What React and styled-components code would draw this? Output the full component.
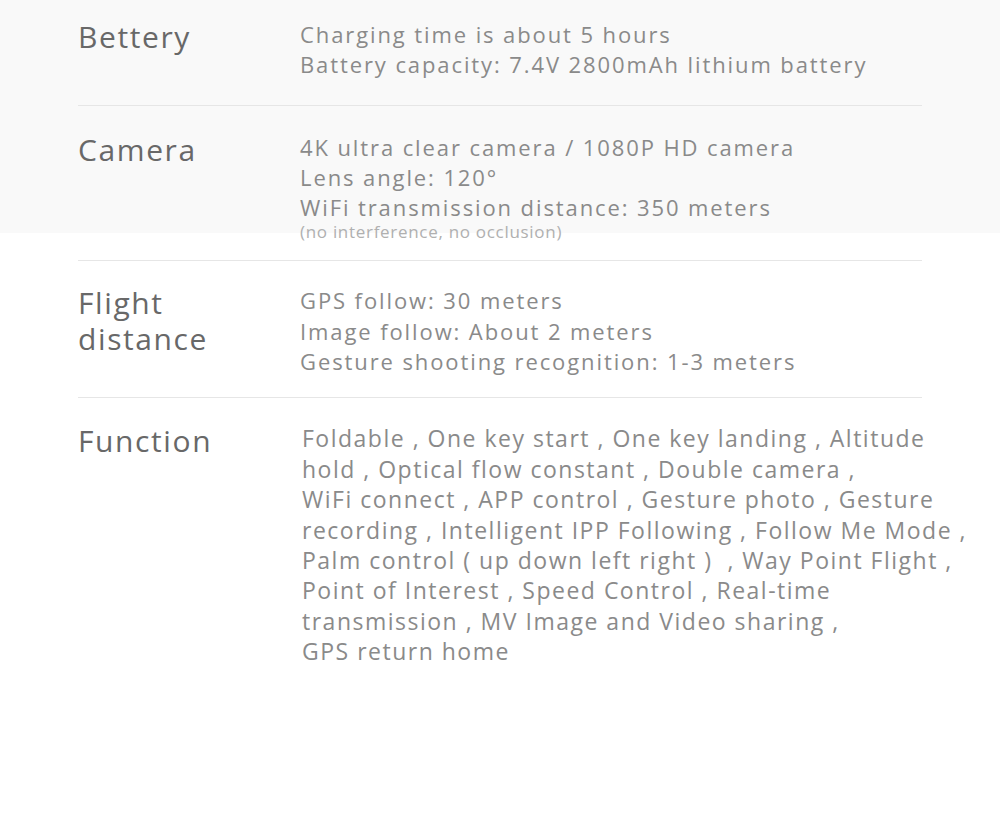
import styled, { createGlobalStyle } from "styled-components";

const GlobalStyle = createGlobalStyle`
  html, body {
    margin: 0;
    padding: 0;
    background: #ffffff;
  }
`;

const specs = [
  {
    label: ["Bettery"],
    pad: "19px 0 25px",
    values: ["Charging time is about 5 hours", "Battery capacity: 7.4V 2800mAh lithium battery"],
  },
  {
    label: ["Camera"],
    pad: "26px 0 18px",
    values: ["4K ultra clear camera / 1080P HD camera", "Lens angle: 120°", "WiFi transmission distance: 350 meters"],
    note: "(no interference, no occlusion)",
  },
  {
    label: ["Flight", "distance"],
    pad: "24px 0 21px",
    values: ["GPS follow: 30 meters", "Image follow: About 2 meters", "Gesture shooting recognition: 1-3 meters"],
  },
];

const functionLines = [
  "Foldable , One key start , One key landing , Altitude",
  "hold , Optical flow constant , Double camera ,",
  "WiFi connect , APP control , Gesture photo , Gesture",
  "recording , Intelligent IPP Following , Follow Me Mode ,",
  "Palm control ( up down left right )  , Way Point Flight ,",
  "Point of Interest , Speed Control , Real-time",
  "transmission , MV Image and Video sharing ,",
  "GPS return home",
];

export default function App() {
  return (
    <Page>
      <GlobalStyle />
      <Table>
        {specs.map((spec) => (
          <Row key={spec.label.join(" ")} pad={spec.pad}>
            <Label>
              {spec.label.map((l) => (
                <span key={l}>{l}</span>
              ))}
            </Label>
            <Values>
              {spec.values.map((v) => (
                <Value key={v}>{v}</Value>
              ))}
              {spec.note && <Note>{spec.note}</Note>}
            </Values>
          </Row>
        ))}
        <Row pad="25px 0 40px" last>
          <Label>
            <span>Function</span>
          </Label>
          <FunctionText>
            {functionLines.map((l) => (
              <span key={l}>{l}</span>
            ))}
          </FunctionText>
        </Row>
      </Table>
    </Page>
  );
}

const Page = styled.main`
  width: 1000px;
  min-height: 813px;
  background: linear-gradient(#f9f9f9 0, #f9f9f9 233px, #ffffff 233px);
  font-family: "Open Sans", "Noto Sans", sans-serif;
`;

const Table = styled.div`
  margin: 0 78px;
  display: flex;
  flex-direction: column;
`;

const Row = styled.section`
  display: grid;
  grid-template-columns: 222px 1fr;
  padding: ${(p) => p.pad};
  border-bottom: ${(p) => (p.last ? "none" : "1px solid #e6e6e6")};
`;

const Label = styled.div`
  display: flex;
  flex-direction: column;
  font-size: 30px;
  line-height: 36px;
  color: #686868;
  letter-spacing: 1.6px;
`;

const Values = styled.div`
  display: flex;
  flex-direction: column;
`;

const Value = styled.span`
  font-size: 22px;
  line-height: 30.3px;
  color: #8a8a8a;
  letter-spacing: 1.9px;
  white-space: nowrap;
`;

const Note = styled.span`
  font-size: 17px;
  line-height: 20px;
  color: #b0b0b0;
  letter-spacing: 0.7px;
  white-space: nowrap;
`;

const FunctionText = styled.div`
  display: flex;
  flex-direction: column;
  padding-left: 2px;
  font-size: 23px;
  line-height: 30.4px;
  color: #8a8a8a;
  letter-spacing: 1.5px;
  white-space: pre;
`;
